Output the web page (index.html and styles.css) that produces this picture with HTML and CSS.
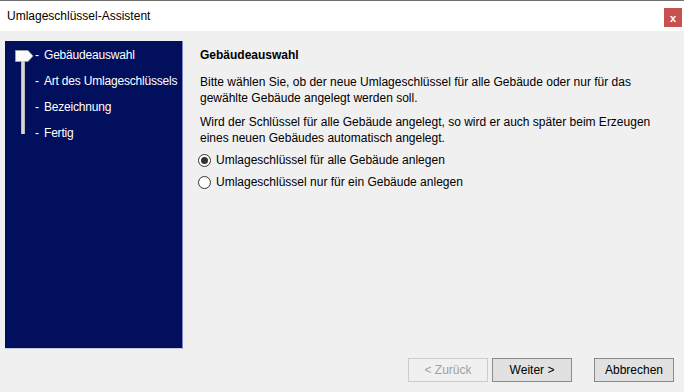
FILE: index.html
```html
<!DOCTYPE html>
<html lang="de">
<head>
  <meta charset="UTF-8">
  <title>Umlageschlüssel-Assistent</title>
  <link rel="stylesheet" href="styles.css">
</head>
<body>

  <div class="window">
    <!-- Title bar -->
    <div class="titlebar">
      <span class="title">Umlageschlüssel-Assistent</span>
      <span class="close">x</span>
    </div>

    <div class="body">
      <div class="main">
        <!-- Step list -->
        <div class="steps">
          <div class="marker">
            <svg width="19" height="12" viewBox="0 0 19 12">
              <path d="M0.5 0.5 H13 L18 6 L13 11.5 H0.5 Z" fill="#fafafa" stroke="#a0a0a0"/>
            </svg>
          </div>
          <div class="pole"></div>
          <div class="step"><span class="dash">-</span>Gebäudeauswahl</div>
          <div class="step"><span class="dash">-</span>Art des Umlageschlüssels</div>
          <div class="step"><span class="dash">-</span>Bezeichnung</div>
          <div class="step"><span class="dash">-</span>Fertig</div>
        </div>

        <!-- Page content -->
        <div class="content">
          <h1>Gebäudeauswahl</h1>
          <p>Bitte wählen Sie, ob der neue Umlageschlüssel für alle Gebäude oder nur für das gewählte Gebäude angelegt werden soll.</p>
          <p>Wird der Schlüssel für alle Gebäude angelegt, so wird er auch später beim Erzeugen eines neuen Gebäudes automatisch angelegt.</p>
          <div class="options">
            <div class="option"><span class="radio checked"></span>Umlageschlüssel für alle Gebäude anlegen</div>
            <div class="option"><span class="radio"></span>Umlageschlüssel nur für ein Gebäude anlegen</div>
          </div>
        </div>
      </div>

      <!-- Buttons -->
      <div class="footer">
        <button class="btn" disabled>&lt; Zurück</button>
        <button class="btn">Weiter &gt;</button>
        <button class="btn cancel">Abbrechen</button>
      </div>
    </div>
  </div>

</body>
</html>
```

FILE: styles.css
```css
* {
  margin: 0;
  padding: 0;
  box-sizing: border-box;
}

body {
  font-family: 'Liberation Sans', Arial, sans-serif;
  font-size: 12px;
  color: #000;
  width: 684px;
  height: 392px;
  overflow: hidden;
}

.window {
  display: flex;
  flex-direction: column;
  height: 392px;
  background-color: #f0f0f0;
}

.titlebar {
  height: 31px;
  background-color: #fff;
  border-top: 1px solid #6f6f6f;
  display: flex;
  align-items: center;
  justify-content: space-between;
  padding: 0 2px 0 7px;
}

.close {
  width: 18px;
  height: 19px;
  background-color: #c75050;
  color: #fff;
  font-weight: bold;
  font-size: 11px;
  display: flex;
  align-items: center;
  justify-content: center;
  margin-top: 3px;
}

.body {
  flex: 1;
  display: flex;
  flex-direction: column;
  padding: 10px 10px 10px 5px;
}

.main {
  height: 308px;
  display: flex;
}

.steps {
  width: 178px;
  background-color: #020f5c;
  border-right: 1px solid #7d83c4;
  border-bottom: 1px solid #c5c9dc;
  padding: 1px 0 0 30px;
  color: #fff;
  position: relative;
  letter-spacing: -0.2px;
}

.step {
  line-height: 26px;
  white-space: nowrap;
}

.dash {
  display: inline-block;
  width: 9px;
}

.marker {
  position: absolute;
  left: 10px;
  top: 9px;
  line-height: 0;
}

.pole {
  position: absolute;
  left: 16px;
  top: 20px;
  width: 4px;
  height: 73px;
  background-color: #d6d6d6;
  border-left: 1px solid #b8b8b8;
  border-right: 1px solid #b8b8b8;
}

.content {
  flex: 1;
  padding: 6px 19px 0 17px;
  line-height: 16px;
}

h1 {
  font-size: 12px;
  font-weight: bold;
  margin-bottom: 11px;
}

p {
  margin-bottom: 8px;
}

.options {
  margin-top: -2px;
  display: flex;
  flex-direction: column;
  gap: 6px;
}

.option {
  display: flex;
  align-items: center;
  gap: 5px;
  margin-left: -2px;
}

.radio {
  width: 13px;
  height: 13px;
  border: 1px solid #333;
  border-radius: 50%;
  background-color: #fff;
  display: flex;
  align-items: center;
  justify-content: center;
}

.radio.checked::after {
  content: '';
  width: 7px;
  height: 7px;
  border-radius: 50%;
  background-color: #333;
}

.footer {
  margin-top: 9px;
  display: flex;
  justify-content: flex-end;
  gap: 4px;
}

.btn {
  width: 80px;
  height: 24px;
  font-family: inherit;
  font-size: 12px;
  background-color: #e1e1e1;
  border: 1px solid #8a8a8a;
  color: #000;
}

.btn:disabled {
  background-color: #f0f0f0;
  border-color: #cccccc;
  color: #a0a0a0;
}

.btn.cancel {
  margin-left: 18px;
}
```
